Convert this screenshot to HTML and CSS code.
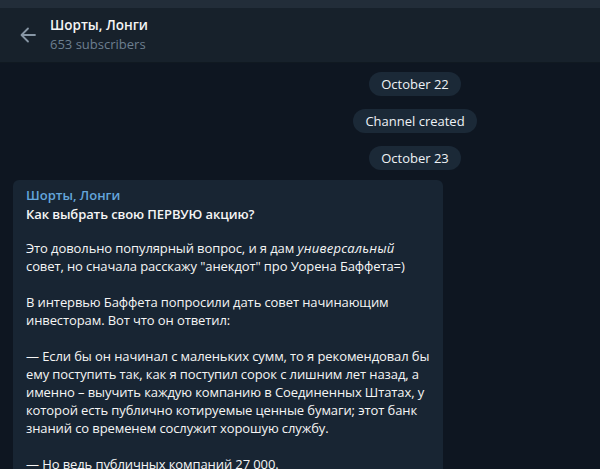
FILE: index.html
```html
<!DOCTYPE html>
<html lang="ru">
<head>
<meta charset="utf-8">
<title>Шорты, Лонги</title>
<link rel="stylesheet" href="styles.css">
</head>
<body>
<div class="app">
  <div class="topstrip"></div>
  <header class="header">
    <button class="back" aria-label="Back">
      <svg width="20" height="20" viewBox="0 0 20 20"><path d="M17 10H4M10 3.5L3.5 10L10 16.5" fill="none" stroke="#8796a5" stroke-width="1.8" stroke-linecap="round" stroke-linejoin="round"/></svg>
    </button>
    <div class="peer">
      <div class="peer-name">Шорты, Лонги</div>
      <div class="peer-status">653 subscribers</div>
    </div>
  </header>
  <main class="chat">
    <div class="service"><span class="pill">October 22</span></div>
    <div class="service"><span class="pill">Channel created</span></div>
    <div class="service"><span class="pill">October 23</span></div>
    <div class="bubble">
      <div class="author">Шорты, Лонги</div>
      <p class="title">Как выбрать свою ПЕРВУЮ акцию?</p>
      <p>Это довольно популярный вопрос, и я дам <i class="em">универсальный</i> совет, но сначала расскажу "анекдот" про Уорена Баффета=)</p>
      <p>В интервью Баффета попросили дать совет начинающим инвесторам. Вот что он ответил:</p>
      <p>— Если бы он начинал с маленьких сумм, то я рекомендовал бы ему поступить так, как я поступил сорок с лишним лет назад, а именно – выучить каждую компанию в Соединенных Штатах, у которой есть публично котируемые ценные бумаги; этот банк знаний со временем сослужит хорошую службу.</p>
      <p>— Но ведь публичных компаний 27 000.</p>
    </div>
  </main>
</div>
</body>
</html>
```
FILE: styles.css
```css
html, body {
  margin: 0;
  padding: 0;
  background: #0e1621;
  overflow: hidden;
}
body {
  width: 600px;
  height: 469px;
  font-family: "Open Sans", "Noto Sans", sans-serif;
  font-size: 13px;
  color: #f5f5f5;
}
.app {
  width: 830px;
  display: flex;
  flex-direction: column;
}
.topstrip {
  height: 8px;
  background: #222d39;
}
.header {
  height: 54px;
  background: #17212b;
  display: flex;
  align-items: center;
  border-bottom: 1px solid #101921;
}
.back {
  width: 50px;
  height: 54px;
  border: 0;
  background: none;
  padding: 0 0 0 5px;
  display: flex;
  align-items: center;
  justify-content: center;
}
.peer {
  display: flex;
  flex-direction: column;
  margin-top: -1px;
}
.peer-name {
  font-weight: 600;
  font-size: 13.5px;
  line-height: 18px;
  color: #f5f5f5;
}
.peer-status {
  font-size: 13px;
  line-height: 18px;
  color: #6d7f8f;
  margin-top: 1px;
}
.chat {
  display: flex;
  flex-direction: column;
  padding-top: 9px;
}
.service {
  display: flex;
  justify-content: center;
  margin-bottom: 13px;
}
.pill {
  background: #1b2937;
  color: #eef2f6;
  font-weight: 500;
  font-size: 13px;
  line-height: 18px;
  padding: 3px 12px 3px;
  border-radius: 12px;
}
.bubble {
  margin: -3px 0 0 13px;
  width: 430px;
  box-sizing: border-box;
  background: #182533;
  border-radius: 6px;
  padding: 6px 12px 10px 13px;
  line-height: 18px;
  letter-spacing: -0.1px;
}
.bubble p {
  margin: 0 0 18px;
}
.em {
  letter-spacing: 0.25px;
}
.author {
  color: #64a6dc;
  font-weight: 600;
  line-height: 19px;
  letter-spacing: 0;
}
.bubble .title {
  font-weight: 600;
  margin: 0 0 16px;
}
```
